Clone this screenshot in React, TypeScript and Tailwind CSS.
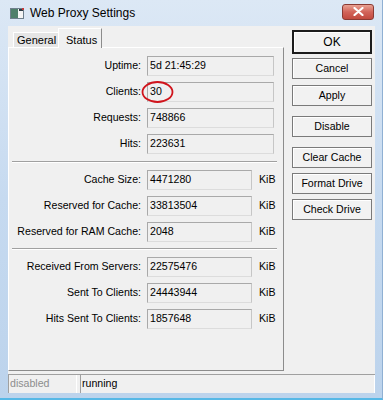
import React from "react";

type Row = {
  label: string;
  value: string;
  unit?: boolean;
  mark?: boolean;
};

const general: Row[] = [
  { label: "Uptime:", value: "5d 21:45:29" },
  { label: "Clients:", value: "30", mark: true },
  { label: "Requests:", value: "748866" },
  { label: "Hits:", value: "223631" },
];

const cache: Row[] = [
  { label: "Cache Size:", value: "4471280", unit: true },
  { label: "Reserved for Cache:", value: "33813504", unit: true },
  { label: "Reserved for RAM Cache:", value: "2048", unit: true },
];

const traffic: Row[] = [
  { label: "Received From Servers:", value: "22575476", unit: true },
  { label: "Sent To Clients:", value: "24443944", unit: true },
  { label: "Hits Sent To Clients:", value: "1857648", unit: true },
];

function Field({ row }: { row: Row }) {
  return (
    <div className="relative flex items-center h-[20px]">
      <span className="w-[132px] text-right whitespace-nowrap">{row.label}</span>
      <div
        className={`${row.unit ? "w-[105px]" : "w-[127px]"} ml-[6px] h-[20px] flex items-center pl-[2px] bg-[#f0f0f0] border border-t-[#a9a9a9] border-l-[#a9a9a9] border-r-[#c6c6c6] border-b-[#dcdcdc]`}
      >
        {row.value}
      </div>
      {row.unit && <span className="ml-[7px]">KiB</span>}
      {row.mark && (
        <svg
          className="absolute left-[132px] top-[-2px]"
          width="33"
          height="24"
          viewBox="0 0 33 24"
        >
          <ellipse cx="16.5" cy="12" rx="15" ry="10" fill="none" stroke="#d0141c" strokeWidth="1.8" />
        </svg>
      )}
    </div>
  );
}

function Group({ rows }: { rows: Row[] }) {
  return (
    <div className="flex flex-col gap-[6px]">
      {rows.map((r) => (
        <Field key={r.label} row={r} />
      ))}
    </div>
  );
}

function Btn({ text, primary, className }: { text: string; primary?: boolean; className?: string }) {
  return (
    <button
      className={`w-[80px] flex items-center justify-center bg-[#f2f2f2] shadow-[inset_1px_1px_0_#ffffff] ${
        primary ? "h-[24px] border-2 border-[#1c1c1c] text-[12px]" : "h-[21px] border border-[#7a7a7a]"
      } ${className ?? ""}`}
    >
      {text}
    </button>
  );
}

export default function App() {
  return (
    <div
      className="w-[383px] h-[400px] flex flex-col bg-gradient-to-b from-[#dce8f5] via-[#c6daf0] to-[#bcd3ec] border-r border-r-[#8fb0d3] border-b-2 border-b-[#56b8e6] text-[10.6px] text-black"
      style={{ fontFamily: '"Liberation Sans", Arial, sans-serif' }}
    >
      <div className="h-[26px] flex items-center shrink-0">
        <svg className="ml-[10px]" width="14" height="11" viewBox="0 0 14 11">
          <rect x="0.5" y="0.5" width="13" height="10" fill="#f4f4f4" stroke="#6e7f8c" />
          <rect x="1" y="1" width="7" height="9" fill="#4e7f6a" />
          <rect x="9" y="1" width="4" height="2" fill="#2b3a44" />
          <rect x="12" y="0" width="2" height="2" fill="#c43a3a" />
        </svg>
        <span className="ml-[6px] text-[12px]">Web Proxy Settings</span>
        <div className="ml-auto mr-[8px] w-[32px] h-[16px] mt-[-3px] rounded-[3px] border border-[#8a3a33] bg-gradient-to-b from-[#e8a193] via-[#d2645a] to-[#c24a3f] flex items-center justify-center">
          <svg width="11" height="9" viewBox="0 0 11 9">
            <path d="M1.5 1 L9.5 8 M9.5 1 L1.5 8" stroke="#ffffff" strokeWidth="2.2" strokeLinecap="round" />
          </svg>
        </div>
      </div>

      <div className="flex-1 mx-[7px] ml-[8px] mb-[5px] bg-[#f0f0f0] flex flex-col">
        <div className="flex flex-1">
          <div className="w-[276px] flex flex-col">
            <div className="h-[21px] flex items-end pl-[5px] text-[11px]">
              <div className="h-[15px] w-[45px] flex items-center pl-[3px] bg-[#e5e5e5] border-t border-l border-white">
                General
              </div>
              <div className="relative z-10 h-[20px] w-[44px] mb-[-1px] flex items-start pt-[3px] pl-[7px] bg-[#f0f0f0] border-t border-l border-white border-r border-r-[#8c8c8c]">
                Status
              </div>
            </div>
            <div className="h-[324px] flex flex-col pt-[8px] border-t border-l border-white border-r border-r-[#8c8c8c] border-b border-b-[#8c8c8c]">
              <Group rows={general} />
              <div className="ml-[3px] mr-[6px] mt-[7px] mb-[7px] border-t border-t-[#a0a0a0] border-b border-b-white" />
              <Group rows={cache} />
              <div className="ml-[3px] mr-[6px] mt-[6px] mb-[7px] border-t border-t-[#a0a0a0] border-b border-b-white" />
              <Group rows={traffic} />
            </div>
          </div>

          <div className="ml-[8px] pt-[4px] flex flex-col">
            <Btn text="OK" primary />
            <Btn text="Cancel" className="mt-[4px]" />
            <Btn text="Apply" className="mt-[6px]" />
            <Btn text="Disable" className="mt-[10px]" />
            <Btn text="Clear Cache" className="mt-[10px]" />
            <Btn text="Format Drive" className="mt-[5px]" />
            <Btn text="Check Drive" className="mt-[5px]" />
          </div>
        </div>

        <div className="h-[19px] mt-[3px] flex border-t border-t-[#a0a0a0]">
          <div className="w-[69px] flex items-center pl-[1px] text-[#8d8d8d] border-l border-l-[#a0a0a0] border-r border-r-white">
            disabled
          </div>
          <div className="flex-1 ml-[3px] flex items-center pl-[1px] border-l border-l-[#a0a0a0] border-r border-r-white">
            running
          </div>
        </div>
      </div>
    </div>
  );
}
